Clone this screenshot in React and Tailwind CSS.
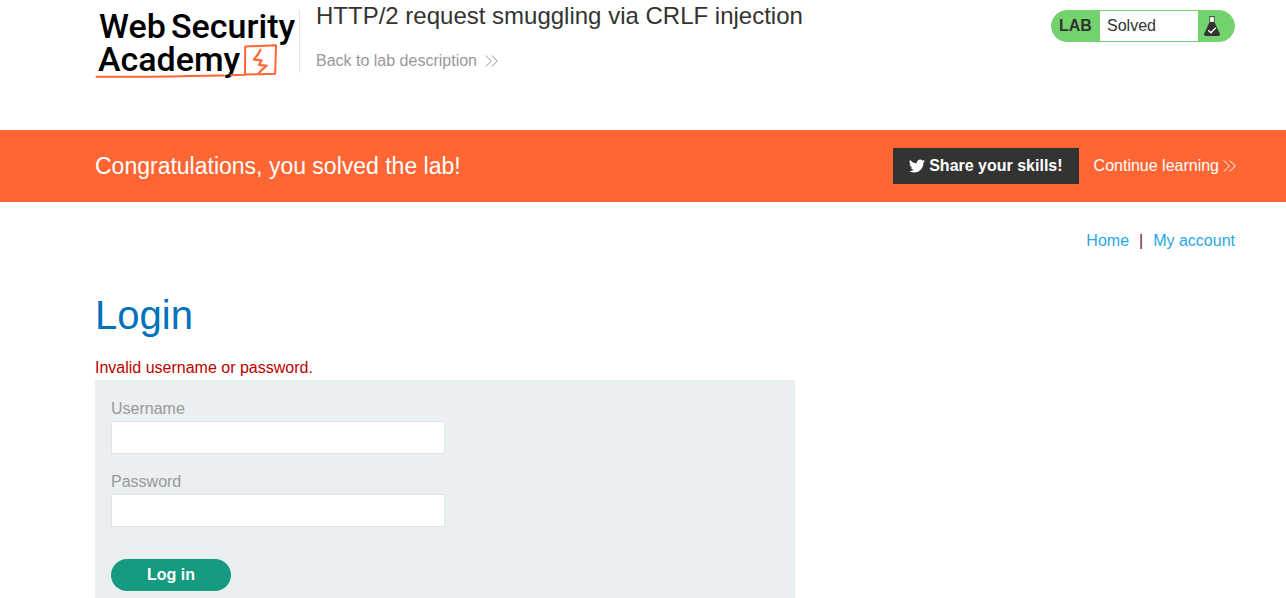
import React from 'react';

function Logo() {
  return (
    <a href="#academy" aria-label="Web Security Academy" className="block shrink-0">
      <svg width="200" height="80" viewBox="95 0 200 80" className="block overflow-visible">
        <g fill="#000" fontFamily="Roboto, 'Liberation Sans', sans-serif" fontSize="34" fontWeight="500">
          <text x="99" y="38">Web</text>
          <text x="171" y="38">Security</text>
          <text x="98" y="71">Academy</text>
        </g>
        <g fill="none" stroke="#ff6633" strokeLinejoin="round" strokeLinecap="round">
          <path strokeWidth="2" d="M96.5 76.8C140 77.2 190 75.8 224 75.6" />
          <path strokeWidth="2" d="M231 75.3L245 74.8L245.2 46.6L276 45.2L275.2 73.8L260 74.2L245 74.6" />
          <path strokeWidth="2.2" d="M260.3 49.8C259.6 53 256.5 55.8 254 59.6L261.5 60.4C261 62.2 258.8 63.8 259.2 65.2L266.6 65.6C264.5 67.8 260.5 70.4 258.8 73.2" />
        </g>
      </svg>
    </a>
  );
}

function DoubleChevron() {
  return (
    <svg width="13" height="12" viewBox="0 0 13 12" fill="none" stroke="currentColor" strokeWidth="1" aria-hidden="true" className="shrink-0">
      <path d="M0.8 0.5L6.3 6L0.8 11.5M6.7 0.5L12.2 6L6.7 11.5" />
    </svg>
  );
}

function Twitter() {
  return (
    <svg width="16" height="16" viewBox="0 0 24 24" fill="currentColor" aria-hidden="true" className="shrink-0">
      <path d="M23.95 4.57a10 10 0 0 1-2.82.77 4.96 4.96 0 0 0 2.16-2.72c-.95.55-2 .95-3.13 1.18a4.92 4.92 0 0 0-8.38 4.48C7.69 8.1 4.07 6.13 1.64 3.16a4.93 4.93 0 0 0 1.52 6.57 4.9 4.9 0 0 1-2.23-.61v.06a4.92 4.92 0 0 0 3.95 4.83 5 5 0 0 1-2.21.08 4.94 4.94 0 0 0 4.6 3.42A9.87 9.87 0 0 1 0 19.54a13.99 13.99 0 0 0 7.55 2.21c9.05 0 14-7.5 14-13.98 0-.21 0-.42-.02-.63a9.94 9.94 0 0 0 2.42-2.57z" />
    </svg>
  );
}

function Flask() {
  return (
    <svg width="16" height="21" viewBox="0 0 16 21" aria-hidden="true">
      <path fill="#fff" d="M6 1.2H10V7H6Z" />
      <path fill="#333332" d="M5 0H11V0.8H5ZM5.5 1H6.2V6.5H5.5ZM9.8 1H10.5V6.5H9.8Z" />
      <path fill="#333332" d="M5.6 6H10.4L15.8 17.8Q16.2 20 14.2 20H1.8Q-.2 20 .2 17.8Z" />
      <path fill="none" stroke="#fff" strokeWidth="1.4" d="M4.2 14.2L7 16.8L11.8 11.6" />
    </svg>
  );
}

function LabStatus() {
  return (
    <div className="flex h-8 w-[184px] shrink-0 items-stretch overflow-hidden rounded-full border border-[#72d26c] bg-[#72d26c] leading-[30px] text-[#333332]">
      <span className="w-12 pl-[7px] font-bold">LAB</span>
      <span className="grow bg-white pl-[7px]">Solved</span>
      <span className="flex w-9 items-center pl-1.5"><Flask /></span>
    </div>
  );
}

function Field({ id, label, type }) {
  return (
    <div className="mb-4">
      <label htmlFor={id} className="block leading-6 text-[#999999]">{label}</label>
      <input id={id} name={id} type={type} className="block h-[33px] w-full max-w-[334px] border border-[#e4e4e4] bg-white px-2 text-[#333332] outline-none" />
    </div>
  );
}

export default function App() {
  return (
    <div className="bg-white font-['Liberation_Sans',Arial,sans-serif] text-base leading-6 text-[#333332]">
      <header className="flex h-[130px] items-start pr-[51px] pl-[95px]">
        <Logo />
        <div className="mt-2.5 ml-1 min-h-[62px] grow border-l border-[#e4e4e4] pl-4">
          <h1 className="-mt-2.5 text-2xl leading-8">HTTP/2 request smuggling via CRLF injection</h1>
          <a href="#description" className="mt-[17px] flex items-center gap-2 text-[#999999]">
            Back to lab description <DoubleChevron />
          </a>
        </div>
        <div className="mt-2.5"><LabStatus /></div>
      </header>

      <section className="flex h-[72px] items-center bg-[#ff6633] pr-[50px] pl-[95px] text-white">
        <h2 className="grow text-[23px] leading-8">Congratulations, you solved the lab!</h2>
        <button type="button" className="flex h-9 items-center gap-1 bg-[#333332] px-4 font-bold">
          <Twitter /> Share your skills!
        </button>
        <a href="#continue" className="ml-[15px] flex items-center gap-1">
          Continue learning <DoubleChevron />
        </a>
      </section>

      <main className="pr-[51px] pl-[95px]">
        <nav className="flex justify-end gap-[10px] pt-[27px] text-[#29a7e4]">
          <a href="#home">Home</a>
          <span className="text-[#5c2230]">|</span>
          <a href="#account">My account</a>
        </nav>
        <h1 className="mt-[38px] text-[40px] leading-[48px] text-[#0071bb]">Login</h1>
        <p className="mt-[17px] text-[#bb0000]">Invalid username or password.</p>
        <form className="max-w-[700px] bg-[#eaeff2] p-4 pt-[17px]" onSubmit={(e) => e.preventDefault()}>
          <Field id="username" label="Username" type="text" />
          <Field id="password" label="Password" type="password" />
          <button type="submit" className="mt-4 h-8 w-[120px] rounded-full bg-[#169b80] font-bold text-white">Log in</button>
        </form>
      </main>
    </div>
  );
}
